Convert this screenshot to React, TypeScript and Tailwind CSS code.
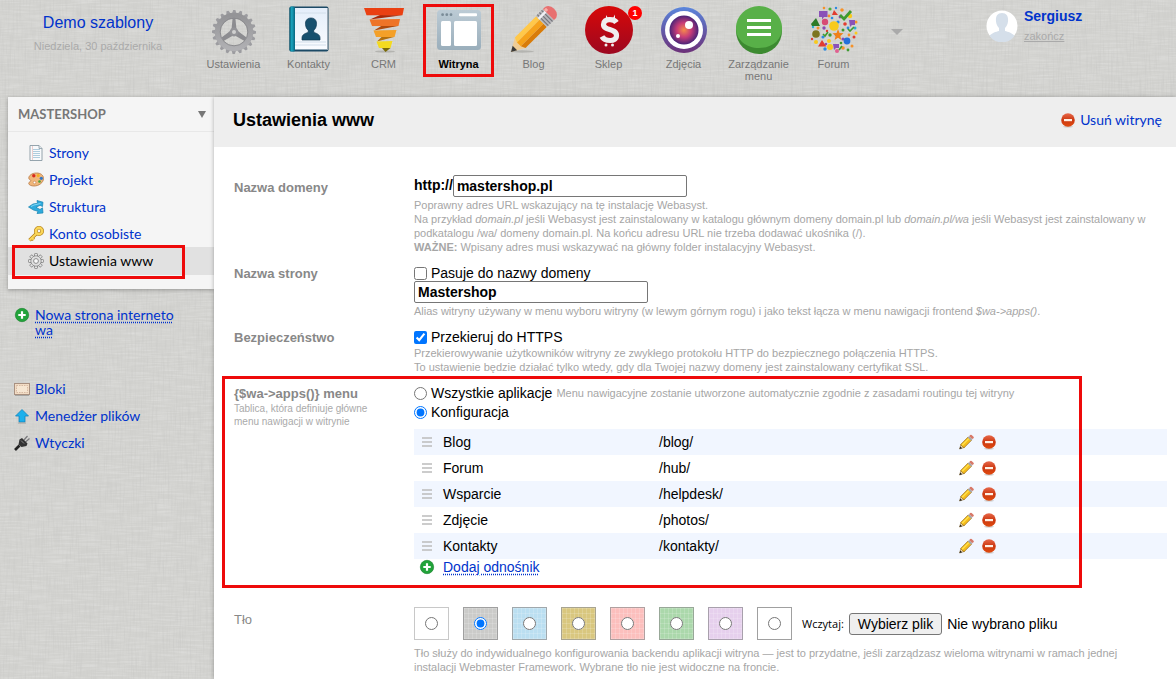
import { useRef, useState } from 'react'
import type { ReactNode } from 'react'

const apps = [
  { id: 'settings', label: 'Ustawienia', icon: GearAppIcon },
  { id: 'contacts', label: 'Kontakty', icon: ContactsAppIcon },
  { id: 'crm', label: 'CRM', icon: CrmAppIcon },
  { id: 'site', label: 'Witryna', icon: SiteAppIcon },
  { id: 'blog', label: 'Blog', icon: BlogAppIcon },
  { id: 'shop', label: 'Sklep', icon: ShopAppIcon, badge: 1 },
  { id: 'photos', label: 'Zdjęcia', icon: PhotosAppIcon },
  { id: 'menu', label: 'Zarządzanie menu', icon: MenuAppIcon },
  { id: 'hub', label: 'Forum', icon: ForumAppIcon }
]

const siteLinks = [
  { label: 'Strony', icon: PagesIcon },
  { label: 'Projekt', icon: PaletteIcon },
  { label: 'Struktura', icon: StructureIcon },
  { label: 'Konto osobiste', icon: KeyIcon }
]

const toolLinks = [
  { label: 'Bloki', icon: BlocksIcon },
  { label: 'Menedżer plików', icon: UploadIcon },
  { label: 'Wtyczki', icon: PlugIcon }
]

const menuRows = [
  { name: 'Blog', url: '/blog/' },
  { name: 'Forum', url: '/hub/' },
  { name: 'Wsparcie', url: '/helpdesk/' },
  { name: 'Zdjęcie', url: '/photos/' },
  { name: 'Kontakty', url: '/kontakty/' }
]

const backgrounds = [
  { id: 'none', className: 'bg-white border-[#c8c8c8]' },
  { id: 'linen', className: 'bg-[#cbcbc9] border-[#a0a0a0]' },
  { id: 'blue', className: 'bg-[#bbdff1] border-[#a0a8ac]' },
  { id: 'sand', className: 'bg-[#d9c77f] border-[#a8a490]' },
  { id: 'pink', className: 'bg-[#fcbfbd] border-[#b0a0a0]' },
  { id: 'green', className: 'bg-[#abd8ab] border-[#98a898]' },
  { id: 'violet', className: 'bg-[#e6d0ed] border-[#a8a0ac]' },
  { id: 'custom', className: 'bg-white border-[#a0a0a0]' }
]

const weave =
  'bg-[repeating-linear-gradient(90deg,rgba(255,255,255,0.16)_0_1px,transparent_1px_4px),repeating-linear-gradient(0deg,rgba(255,255,255,0.16)_0_1px,transparent_1px_5px)]'

const humanist = 'font-[Lato,sans-serif]'

/* ---------- app icons, 48px ---------- */

function GearAppIcon() {
  const teeth = Array.from({ length: 20 }, (_, i) => i * 18)
  return (
    <svg viewBox="0 0 48 48" className="size-12">
      <defs>
        <linearGradient id="gearFill" x1="0" y1="0" x2="0" y2="1">
          <stop offset="0" stopColor="#949497" />
          <stop offset="1" stopColor="#b0b0b3" />
        </linearGradient>
      </defs>
      {teeth.map((a) => (
        <path key={a} d="M21.8 8 L23.2 4 H25.4 L26.6 8 Z" fill="#9c9ca0" transform={`rotate(${a} 24 26)`} />
      ))}
      <circle cx="24" cy="26" r="16.4" fill="none" stroke="url(#gearFill)" strokeWidth="5.6" />
      <circle cx="24" cy="26" r="13.8" fill="none" stroke="#808084" strokeWidth="0.8" />
      <path d="M22.600 12 H25.400 L26.500 24 L36.500 31.500 L34.500 35 L24 29 L13.500 35 L11.500 31.500 L21.500 24z" fill="#8c8c90" />
      <circle cx="24" cy="26" r="4.4" fill="#949498" />
      <circle cx="24" cy="26" r="2" fill="#d0d0d0" />
    </svg>
  )
}

function ContactsAppIcon() {
  return (
    <svg viewBox="0 0 48 48" className="size-12">
      <defs>
        <linearGradient id="spine" x1="0" y1="0" x2="1" y2="0">
          <stop offset="0" stopColor="#04586f" />
          <stop offset="0.4" stopColor="#1ba6c0" />
          <stop offset="1" stopColor="#08657f" />
        </linearGradient>
        <linearGradient id="cover" x1="0" y1="0" x2="0" y2="1">
          <stop offset="0" stopColor="#e4eefa" />
          <stop offset="1" stopColor="#fafcff" />
        </linearGradient>
      </defs>
      <rect x="4.5" y="0.5" width="39" height="45" rx="2" fill="#1c4a66" />
      <rect x="9" y="2" width="33" height="41.5" fill="url(#cover)" />
      <path d="M10 7H41 M10 36H41 M10 39H41" stroke="#d2deea" />
      <rect x="4.5" y="0.5" width="5.5" height="45" rx="1.5" fill="url(#spine)" />
      <path d="M42.5 2V44" stroke="#9aa8b4" />
      <path d="M26 12c-4.200 0-5.800 3-5.500 6.500.2 2.700 1.300 4.500 2.700 5.700v2.200c-2.800.9-6.200 2-6.200 5.600V34h18v-2c0-3.600-3.400-4.700-6.200-5.600v-2.200c1.400-1.200 2.500-3 2.700-5.700.3-3.500-1.300-6.500-5.500-6.500z" fill="#17506e" stroke="#0f3a54" strokeWidth="0.7" />
    </svg>
  )
}

function CrmAppIcon() {
  return (
    <svg viewBox="0 0 48 48" className="size-12">
      <ellipse cx="25" cy="45.500" rx="10" ry="1" fill="#b4b4b0" />
      <path d="M42.500 9.200 L10 13.500 L20 9z" fill="#a82808" />
      <path d="M38 20 L14 24.500 L22 19.500z" fill="#b04a0c" />
      <path d="M34 31 L17 35.500 L22 30.500z" fill="#b4700c" />
      <path d="M22 42 H30.500 L25.500 46z" fill="#7a6a08" />
      <path d="M4 2 H44 L42.500 9.200 H6.500z" fill="#ea4012" />
      <path d="M9.500 13.500 L40 13 L38.500 20 L12 20z" fill="#ee7428" />
      <path d="M13.500 24.500 L36.500 24 L34.500 31 L16 31z" fill="#f4a028" />
      <path d="M16.500 35.500 L32.500 35 L30.500 42 L19 42z" fill="#f4da20" />
    </svg>
  )
}

function SiteAppIcon() {
  return (
    <svg viewBox="0 0 48 48" className="size-12">
      <defs>
        <linearGradient id="siteFrame" x1="0" y1="0" x2="0" y2="1">
          <stop offset="0" stopColor="#bccbd5" />
          <stop offset="1" stopColor="#9aaebb" />
        </linearGradient>
      </defs>
      <rect x="2" y="4" width="44" height="40" rx="3.500" fill="url(#siteFrame)" />
      <circle cx="7.600" cy="8.700" r="1.400" fill="#7a8c98" />
      <circle cx="11.800" cy="8.700" r="1.400" fill="#7a8c98" />
      <circle cx="16" cy="8.700" r="1.400" fill="#7a8c98" />
      <rect x="24" y="7.200" width="18" height="3" rx="1" fill="#fff" />
      <rect x="6" y="15" width="10" height="25" rx="1.500" fill="#fff" />
      <rect x="19" y="15" width="23" height="25" rx="1.500" fill="#fff" />
    </svg>
  )
}

function BlogAppIcon() {
  return (
    <svg viewBox="0 0 48 48" className="size-12">
      <ellipse cx="12" cy="45.500" rx="12" ry="1.200" fill="#b4b4b0" />
      <g transform="translate(1 46) rotate(-45)">
        <path d="M0 0 L13 -7.500 V7.500z" fill="#f0cd96" />
        <path d="M0 0 L5.500 -3.200 V3.200z" fill="#3a3a3a" />
        <path d="M13 -7.500 H43 V-2.500 H11 z" fill="#ffc84a" />
        <path d="M11 -2.500 H43 V3 H11z" fill="#f6a21a" />
        <path d="M11 3 H43 V7.500 H13z" fill="#d97c08" />
        <rect x="43" y="-7.800" width="10" height="15.600" fill="#b8b8bc" />
        <path d="M45 -7.800V7.800 M48 -7.800V7.800 M51 -7.800V7.800" stroke="#77777c" strokeWidth="1.200" />
        <path d="M43 -4 H53" stroke="#f0f0f4" strokeWidth="2.500" />
        <path d="M53 -7.800 H56 Q61 -6 61 0 Q61 6 56 7.800 H53z" fill="#e87070" />
        <path d="M53 -5 H56" stroke="#f8b0a8" strokeWidth="3" />
      </g>
    </svg>
  )
}

function ShopAppIcon() {
  return (
    <svg viewBox="0 0 48 48" className="size-12">
      <defs>
        <linearGradient id="shopFill" x1="0" y1="0" x2="0" y2="1">
          <stop offset="0" stopColor="#d80808" />
          <stop offset="1" stopColor="#9c0820" />
        </linearGradient>
      </defs>
      <circle cx="24" cy="24" r="24" fill="url(#shopFill)" />
      <path d="M31.500 16.500 C29 12.500 18.500 12 18.500 18.500 C18.500 25 31.500 22 31.500 29.500 C31.500 36.500 19.500 35.500 17 30.500" fill="none" stroke="#f0eeee" strokeWidth="5.200" />
      <path d="M21 9 L23 12 H28 L30 8.500 L30 15 H21z" fill="#f0eeee" />
      <circle cx="21" cy="39" r="1.500" fill="#f0eeee" />
      <circle cx="27.500" cy="39" r="1.500" fill="#f0eeee" />
    </svg>
  )
}

function PhotosAppIcon() {
  return (
    <svg viewBox="0 0 48 48" className="size-12">
      <defs>
        <linearGradient id="lensRing" x1="0" y1="0" x2="0" y2="1">
          <stop offset="0" stopColor="#5a86dc" />
          <stop offset="1" stopColor="#6c3078" />
        </linearGradient>
        <radialGradient id="lensCore">
          <stop offset="0" stopColor="#f58a4a" />
          <stop offset="0.5" stopColor="#c83c78" />
          <stop offset="1" stopColor="#4a2478" />
        </radialGradient>
      </defs>
      <circle cx="24" cy="24" r="23" fill="url(#lensRing)" />
      <circle cx="24" cy="24" r="19" fill="#fff" />
      <circle cx="24" cy="24" r="14.500" fill="url(#lensCore)" />
      <circle cx="29" cy="19" r="4" fill="#fff" />
      <circle cx="18" cy="30" r="2" fill="#fff" />
    </svg>
  )
}

function MenuAppIcon() {
  return (
    <svg viewBox="0 0 48 48" className="size-12">
      <circle cx="24" cy="25" r="23" fill="#3c8a30" />
      <path d="M1 22 A23 22 0 0 1 47 22 C47 34 37 42 24 42 C11 42 1 34 1 22z" fill="#58b048" />
      <path d="M12 14.500H36 M12 21.500H36 M12 28.500H36" stroke="#fff" strokeWidth="3" />
    </svg>
  )
}

const forumDots: [number, number, number, string][] = [
  [20, 3, 1.6, '#4aae3c'], [32, 4, 1.8, '#f5922a'], [40, 10, 2.2, '#f8ca1c'], [26, 2, 1.2, '#2c8ae0'],
  [15, 16, 3.2, '#d84a74'], [28, 16, 1.6, '#2c8ae0'], [35, 18, 1.8, '#e23c30'], [46, 16, 1.5, '#f5922a'],
  [24, 20, 4.8, '#f8ca1c'], [14, 22, 1.7, '#8a48b4'], [33, 24, 1.5, '#3f9a30'], [45, 22, 1.5, '#2cb0d0'],
  [6, 28, 3.8, '#7c7420'], [13, 31, 1.6, '#2c8ae0'], [20, 29, 1.7, '#3f9a30'], [19, 35, 2, '#f8ca1c'],
  [33, 33, 1.6, '#8a48b4'], [37, 35, 3.4, '#2470dc'], [44, 31, 1.5, '#e23c30'], [46, 27, 1.5, '#f8ca1c'],
  [6, 36, 2, '#f8ca1c'], [15, 43, 1.7, '#2c8ae0'], [20, 41, 3, '#f8ca1c'], [27, 45, 2, '#e06090'],
  [33, 42, 1.8, '#f5922a'], [42, 40, 1.5, '#f5922a'], [38, 44, 1.4, '#3f9a30'], [3, 21, 1.2, '#2cb0d0'],
  [22, 12, 1.3, '#2c8ae0'], [14, 2, 1.3, '#f5922a'], [30, 11, 1.4, '#8a48b4'], [2, 33, 1.2, '#e23c30'],
  [26, 29, 1.2, '#2c8ae0'], [31, 37, 1.3, '#3f9a30'], [39, 29, 1.4, '#f5922a'], [17, 25, 1.2, '#e23c30'],
  [19, 10, 1.4, '#f5922a'], [38, 22, 1.4, '#2c8ae0'], [8, 22, 1.5, '#f5922a'], [16, 38, 1.2, '#8a48b4']
]

function ForumAppIcon() {
  return (
    <svg viewBox="0 0 48 48" className="size-12">
      {forumDots.map(([x, y, r, fill]) => (
        <circle key={`${x}-${y}`} cx={x} cy={y} r={r} fill={fill} />
      ))}
      <path d="M9 5h8.500v6H14l-2 2.500V11H9z" fill="#8a52b8" />
      <path d="M24 4l4 5h-6z" fill="#e23c30" />
      <path d="M30 9l4 4 7-8" fill="none" stroke="#3f9a30" strokeWidth="2.800" />
      <path d="M1 18l5-6 3 6 1 2H2z" fill="#2c7a28" />
      <path d="M39 14h6v5h-3l-2 2z" fill="#8a52b8" />
      <path d="M28 23l1.500 4 4 .3-3.200 2.600 1 4-3.300-2.200-3.400 2.200 1-4-3-2.600 4-.3z" fill="#f08018" />
      <path d="M12 34l4.500 6.500H8z" fill="#e23c30" />
      <path d="M23 38h6v4h-3l-2 2z" fill="#8a52b8" />
      <path d="M38 23l2 2 4-4 M13 28l2 2 3-4 M29 44l3-4" fill="none" stroke="#3f9a30" strokeWidth="1.600" />
    </svg>
  )
}

/* ---------- 16px icons ---------- */

function PagesIcon() {
  return (
    <svg viewBox="0 0 16 16" className="size-4 shrink-0">
      <path d="M2 .5H11L14 3.500V15.500H2z" fill="#f8fafc" stroke="#8a9aa4" strokeWidth="0.900" />
      <path d="M11 .5V3.500H14" fill="#dfe6ea" stroke="#8a9aa4" strokeWidth="0.800" />
      <path d="M5 4.500H12 M5 6.500H12 M5 8.500H12 M5 10.500H12 M5 12.500H12" stroke="#9cc0d4" strokeWidth="0.800" />
      <path d="M4.500 1V15" stroke="#e4b0ac" strokeWidth="0.600" />
    </svg>
  )
}

function PaletteIcon() {
  return (
    <svg viewBox="0 0 16 16" className="size-4 shrink-0">
      <path d="M8.500 1C3.500 1 .5 4 .8 6.300c.2 1.600 2 1.200 2 2.400C2.800 9.900.7 9.800.7 11.300.7 13 3.300 14 6 14c5 0 9.500-3.500 9.500-7.500C15.500 3 12.500 1 8.500 1z" fill="#f0b67a" stroke="#b87844" strokeWidth="0.800" />
      <circle cx="5.800" cy="3.800" r="1.700" fill="#d8281c" />
      <circle cx="10.200" cy="3.400" r="1.500" fill="#f4b01c" />
      <circle cx="13.300" cy="6.300" r="1.600" fill="#3278c8" />
      <circle cx="11.500" cy="9.500" r="1.300" fill="#48a038" />
      <circle cx="6.500" cy="10.500" r="1.300" fill="#fff" stroke="#b4703a" strokeWidth="0.500" />
    </svg>
  )
}

function StructureIcon() {
  return (
    <svg viewBox="0 0 16 16" className="size-4 shrink-0">
      <path d="M.5 8 L5 5 L9.500 4.300 L9 1.500 L15 3.200 L14.500 7.500 L12 6.300 L8 8.300 L12 10.500 L14.500 8.800 L15 14 L9 14.500 L10 12.300 L5.500 11z" fill="#2eaadc" stroke="#1682b0" strokeWidth="0.700" />
      <path d="M3 7.500 L6 6 L12.500 4.500" fill="none" stroke="#8cdcf8" strokeWidth="0.900" />
    </svg>
  )
}

function KeyIcon() {
  return (
    <svg viewBox="0 0 16 16" className="size-4 shrink-0">
      <path d="M8.500 7.500 L1.500 14.300 M4 12 L5.800 13.800" stroke="#b07c14" strokeWidth="3.400" />
      <circle cx="11" cy="5" r="3.200" fill="none" stroke="#b07c14" strokeWidth="3.600" />
      <path d="M8.500 7.500 L1.500 14.300 M4 12 L5.800 13.800" stroke="#fad658" strokeWidth="2" />
      <circle cx="11" cy="5" r="3.200" fill="none" stroke="#fad658" strokeWidth="2.400" />
    </svg>
  )
}

function SmallGearIcon() {
  const teeth = Array.from({ length: 8 }, (_, i) => i * 45)
  return (
    <svg viewBox="0 0 16 16" className="size-4 shrink-0">
      {teeth.map((a) => (
        <rect key={a} x="6.500" y="0.500" width="3" height="3.500" rx="0.800" fill="#e4e4e4" stroke="#7a7a7a" strokeWidth="0.800" transform={`rotate(${a} 8 8)`} />
      ))}
      <circle cx="8" cy="8" r="5.200" fill="#e0e0e0" stroke="#7a7a7a" strokeWidth="0.700" />
      <circle cx="8" cy="8" r="2.400" fill="#fafafa" stroke="#808080" strokeWidth="0.900" />
    </svg>
  )
}

function AddIcon() {
  return (
    <svg viewBox="0 0 16 16" className="size-4 shrink-0">
      <circle cx="8" cy="8" r="6.700" fill="#22a33a" stroke="#15802a" strokeWidth="0.600" />
      <path d="M8 4.300V11.700 M4.300 8H11.700" stroke="#fff" strokeWidth="2.200" />
    </svg>
  )
}

function DeleteIcon() {
  return (
    <svg viewBox="0 0 16 16" className="size-4 shrink-0">
      <defs>
        <linearGradient id="stop" x1="0" y1="0" x2="0" y2="1">
          <stop offset="0" stopColor="#e8694c" />
          <stop offset="0.500" stopColor="#cc3810" />
          <stop offset="1" stopColor="#e04c10" />
        </linearGradient>
      </defs>
      <ellipse cx="8" cy="14.700" rx="5" ry="0.800" fill="#c8c8c8" />
      <circle cx="8" cy="8" r="6.800" fill="url(#stop)" />
      <rect x="4" y="7" width="8" height="2.200" fill="#fff0e4" />
    </svg>
  )
}

function EditIcon() {
  return (
    <svg viewBox="0 0 16 16" className="size-4 shrink-0">
      <g transform="translate(1.500 15) rotate(-45)">
        <path d="M0 0 L4.500 -2.300 V2.300z" fill="#f4dcae" stroke="#7a5a20" strokeWidth="0.500" />
        <path d="M0 0 L2.400 -1.300 V1.300z" fill="#222" />
        <rect x="4" y="-2.300" width="10.500" height="4.600" fill="#f6bc1c" stroke="#94660c" strokeWidth="0.700" />
        <path d="M4.500 -0.800H14" stroke="#ffe24c" strokeWidth="1.400" />
        <rect x="14" y="-2.300" width="2" height="4.600" fill="#a8a8a8" />
        <rect x="16" y="-2.300" width="2.500" height="4.600" rx="1" fill="#d87868" />
      </g>
    </svg>
  )
}

function BlocksIcon() {
  return (
    <svg viewBox="0 0 16 16" className="size-4 shrink-0">
      <rect x="0.500" y="2.500" width="15" height="11" fill="#f2dcc4" stroke="#a89080" />
      <rect x="2.500" y="4.500" width="11" height="7" fill="#f6e6d2" stroke="#c8a890" strokeDasharray="1.500 1" strokeWidth="0.700" />
      <path d="M1 14.500H15" stroke="#9a9a98" strokeWidth="0.800" />
    </svg>
  )
}

function UploadIcon() {
  return (
    <svg viewBox="0 0 16 16" className="size-4 shrink-0">
      <path d="M8 1.500 L14.500 8 H11 V14 H5 V8 H1.500z" fill="#1cb0ec" stroke="#1284bc" strokeWidth="0.800" />
      <path d="M4 15H12" stroke="#a0a09c" />
    </svg>
  )
}

function PlugIcon() {
  return (
    <svg viewBox="0 0 16 16" className="size-4 shrink-0">
      <path d="M10 5 L13.500 1 M11.500 7 L15.500 3.500" stroke="#77777a" strokeWidth="1.200" />
      <path d="M8 3 L13.500 8.500 L12.500 11 L7.500 12 L4.500 9.500 L5.500 4.500z" fill="#333" />
      <path d="M5.500 10.500 L1 15" stroke="#222" strokeWidth="2.600" />
      <path d="M7 5.500 L10 8.500" stroke="#888" />
    </svg>
  )
}

function SortIcon() {
  return (
    <svg viewBox="0 0 10 10" className="size-2.5">
      <path d="M0 1H10 M0 5H10 M0 9H10" stroke="#bcbcbc" strokeWidth="1.600" />
    </svg>
  )
}

/* ---------- layout pieces ---------- */

// Fine woven texture behind the whole page
function Linen() {
  return (
    <svg className="absolute inset-0 size-full opacity-40" aria-hidden="true">
      <filter id="weft" x="0" y="0" width="100%" height="100%">
        <feTurbulence type="fractalNoise" baseFrequency="0.04 0.6" numOctaves="2" seed="4" />
        <feColorMatrix values="0 0 0 0 1  0 0 0 0 1  0 0 0 0 1  1.100 0 0 0 -0.430" />
      </filter>
      <filter id="warp" x="0" y="0" width="100%" height="100%">
        <feTurbulence type="fractalNoise" baseFrequency="0.6 0.04" numOctaves="2" seed="9" />
        <feColorMatrix values="0 0 0 0 0.450  0 0 0 0 0.450  0 0 0 0 0.440  1 0 0 0 -0.440" />
      </filter>
      <rect width="100%" height="100%" filter="url(#weft)" />
      <rect width="100%" height="100%" filter="url(#warp)" />
    </svg>
  )
}

function Frame({ className }: { className: string }) {
  return <div className={`pointer-events-none absolute border-[3px] border-[#ee0a0a] ${className}`} />
}

function Field({ label, note, className = '', children }: { label: ReactNode; note?: ReactNode; className?: string; children: ReactNode }) {
  return (
    <div className={`relative flex ${className}`}>
      <div className="w-[180px] shrink-0 pt-px text-[13px] leading-4 text-[#888]">
        {label}
        {note}
      </div>
      <div className="min-w-0 flex-1">{children}</div>
    </div>
  )
}

function Hint({ children }: { children: ReactNode }) {
  return <p className="pt-px text-[11px] leading-[14px] text-[#a6a6a6]">{children}</p>
}

function Header() {
  return (
    <header className="relative flex h-[97px]">
      <div className="w-[196px] shrink-0 pt-3 text-center">
        <a href="#" className="block text-base leading-[22px] text-[#03c]">Demo szablony</a>
        <div className="mt-1 text-[11px] leading-4 text-[#aaa]">Niedziela, 30 października</div>
      </div>
      <nav className="flex">
        {apps.map((app) => {
          const Icon = app.icon
          const active = app.id === 'site'
          return (
            <a
              key={app.id}
              href="#"
              className={`relative flex w-[75px] flex-col items-center pt-1.5 text-center text-[11px] leading-3 ${
                active ? 'font-bold text-black' : 'text-[#777]'
              }`}
            >
              <Icon />
              <span className="mt-1 px-1">{app.label}</span>
              {app.badge && (
                <span className="absolute top-1.5 right-1 flex size-3.5 items-center justify-center rounded-full bg-[#f00] text-[9px] font-bold text-white">
                  {app.badge}
                </span>
              )}
              {active && <Frame className="inset-x-0.5 top-1 h-[73px]" />}
            </a>
          )
        })}
      </nav>
      <button type="button" aria-label="Więcej" className="ml-5 h-16 w-3">
        <svg viewBox="0 0 12 6" className="h-1.5 w-3"><path d="M0 0H12L6 6z" fill="#aaa" /></svg>
      </button>
      <div className="ml-[83px] flex pt-2">
        <svg viewBox="0 0 32 32" className="mt-0.5 size-8">
          <circle cx="16" cy="16" r="15.500" fill="#fff" />
          <path d="M16 3c-5 0-6.500 4-6 8.500.3 3 1.500 5 3 6.500v3c-3 1-7 1.500-9.500 5A15.500 15.500 0 0 0 28.500 26c-2.500-3.500-6.500-4-9.500-5v-3c1.500-1.500 2.700-3.500 3-6.500.5-4.500-1-8.500-6-8.500z" fill="#d5dfea" />
        </svg>
        <div className="ml-1.5">
          <a href="#" className="block text-sm leading-4 font-bold text-[#03c]">Sergiusz</a>
          <a href="#" className="mt-1 block text-[11px] leading-4 text-[#aaa] underline">zakończ</a>
        </div>
      </div>
    </header>
  )
}

function Sidebar() {
  return (
    <aside className={`relative w-[214px] shrink-0 pl-2 text-sm text-[#03c] ${humanist}`}>
      <div className="h-48 bg-[#f5f5f5] shadow-[0_1px_4px_rgba(0,0,0,0.3)]">
        <button type="button" className="flex h-[35px] w-full items-center justify-between border-b border-[#e8e8e8] pr-2 pl-2.5 text-[13px] font-bold text-[#777]">
          MASTERSHOP
          <svg viewBox="0 0 8 7" className="h-[7px] w-2"><path d="M0 0H8L4 7z" fill="#777" /></svg>
        </button>
        <ul className="pt-[7px]">
          {siteLinks.map(({ label, icon: Icon }) => (
            <li key={label}>
              <a href="#" className="flex h-[27px] items-center gap-[5px] pl-5"><Icon />{label}</a>
            </li>
          ))}
          <li className="relative bg-[#e1e1e1] text-black">
            <a href="#" className="flex h-7 items-center gap-[5px] pl-5"><SmallGearIcon />Ustawienia www</a>
            <Frame className="-top-0.5 left-1 h-[34px] w-[173px]" />
          </li>
        </ul>
      </div>
      <a href="#" className="mt-[18px] flex items-start gap-[5px] pl-1.5 leading-[15px]">
        <AddIcon />
        <span className="w-[142px] break-all underline decoration-dotted underline-offset-2">Nowa strona interneto<wbr />wa</span>
      </a>
      <ul className="mt-[38px] pl-1.5">
        {toolLinks.map(({ label, icon: Icon }) => (
          <li key={label}>
            <a href="#" className="flex h-[27px] items-center gap-[5px]"><Icon />{label}</a>
          </li>
        ))}
      </ul>
    </aside>
  )
}

function MenuTable() {
  return (
    <table className="mt-[9px] w-full table-fixed border-collapse">
      <tbody>
        {menuRows.map((row) => (
          <tr key={row.url} className="h-[26px] odd:bg-[#f1f6ff]">
            <td className="w-[29px] pl-2"><SortIcon /></td>
            <td className="w-[216px]">{row.name}</td>
            <td className="w-[299px]">{row.url}</td>
            <td>
              <div className="flex gap-[7px]">
                <button type="button" aria-label={`Edytuj ${row.name}`}><EditIcon /></button>
                <button type="button" aria-label={`Usuń ${row.name}`}><DeleteIcon /></button>
              </div>
            </td>
          </tr>
        ))}
      </tbody>
    </table>
  )
}

function SettingsForm() {
  const [domain, setDomain] = useState('mastershop.pl')
  const [siteName, setSiteName] = useState('Mastershop')
  const [background, setBackground] = useState('linen')
  const fileInput = useRef<HTMLInputElement>(null)
  const textInput = 'h-[22px] w-[234px] rounded-[2px] border border-[#767676] bg-white px-[3px] text-sm font-bold text-black'

  return (
    <form className="pt-7 pr-[9px] pl-5 text-sm leading-4" onSubmit={(e) => e.preventDefault()}>
      <Field label={<label htmlFor="domain" className="block pt-1 font-bold">Nazwa domeny</label>}>
        <div className="flex">
          <span className="pt-0.5 font-bold">http://</span>
          <input id="domain" type="text" className={textInput} value={domain} onChange={(e) => setDomain(e.target.value)} />
        </div>
        <Hint>
          Poprawny adres URL wskazujący na tę instalację Webasyst.<br />
          Na przykład <i>domain.pl</i> jeśli Webasyst jest zainstalowany w katalogu głównym domeny domain.pl lub <i>domain.pl/wa</i> jeśli Webasyst jest zainstalowany w<br />
          podkatalogu /wa/ domeny domain.pl. Na końcu adresu URL nie trzeba dodawać ukośnika (/).<br />
          <b>WAŻNE:</b> Wpisany adres musi wskazywać na główny folder instalacyjny Webasyst.
        </Hint>
      </Field>

      <Field className="mt-[11px]" label={<label htmlFor="site-name" className="block font-bold">Nazwa strony</label>}>
        <label className="flex items-center gap-1">
          <input type="checkbox" className="size-[13px]" />
          Pasuje do nazwy domeny
        </label>
        <input id="site-name" type="text" className={`block ${textInput}`} value={siteName} onChange={(e) => setSiteName(e.target.value)} />
        <Hint>
          Alias witryny używany w menu wyboru witryny (w lewym górnym rogu) i jako tekst łącza w menu nawigacji frontend <i>$wa-&gt;apps()</i>.
        </Hint>
      </Field>

      <Field className="mt-[11px]" label={<span className="font-bold">Bezpieczeństwo</span>}>
        <label className="flex items-center gap-1">
          <input type="checkbox" defaultChecked className="size-[13px]" />
          Przekieruj do HTTPS
        </label>
        <Hint>
          Przekierowywanie użytkowników witryny ze zwykłego protokołu HTTP do bezpiecznego połączenia HTTPS.<br />
          To ustawienie będzie działać tylko wtedy, gdy dla Twojej nazwy domeny jest zainstalowany certyfikat SSL.
        </Hint>
      </Field>

      <Field
        className="mt-[11px]"
        label={<span className="font-bold">{'{$wa->apps()} menu'}</span>}
        note={<p className="w-[150px] text-[10px] leading-[13px] text-[#aaa]">Tablica, która definiuje główne menu nawigacji w witrynie</p>}
      >
        <div className="flex items-center gap-1">
          <label className="flex items-center gap-1">
            <input type="radio" name="apps-menu" className="size-[13px]" />
            Wszystkie aplikacje
          </label>
          <span className="text-[11px] text-[#a6a6a6]">Menu nawigacyjne zostanie utworzone automatycznie zgodnie z zasadami routingu tej witryny</span>
        </div>
        <label className="mt-[3px] flex items-center gap-1">
          <input type="radio" name="apps-menu" defaultChecked className="size-[13px]" />
          Konfiguracja
        </label>
        <MenuTable />
        <a href="#" className="flex items-center gap-2 pl-[5px] text-[#03c]">
          <AddIcon />
          <span className="underline decoration-dotted underline-offset-2">Dodaj odnośnik</span>
        </a>
        <Frame className="-top-[9px] -bottom-[13px] -left-3 right-[85px]" />
      </Field>

      <Field className="mt-8" label={<span className="block pt-1">Tło</span>}>
        <div className="flex items-center gap-3.5">
          {backgrounds.map((bg) => (
            <label key={bg.id} className={`flex h-[33px] w-[35px] items-center justify-center border ${bg.className} ${bg.id === 'none' || bg.id === 'custom' ? '' : weave}`}>
              <input
                type="radio"
                name="background"
                aria-label={bg.id}
                className="size-[13px]"
                checked={background === bg.id}
                onChange={() => setBackground(bg.id)}
              />
            </label>
          ))}
          <div className="-ml-1 flex items-center gap-[5px] whitespace-nowrap">
            <label htmlFor="bg-file" className="text-[11px] font-['Open_Sans',sans-serif]">Wczytaj:</label>
            <input ref={fileInput} id="bg-file" type="file" className="hidden" />
            <button type="button" className="h-[22px] rounded-[3px] border border-[#767676] bg-[#efefef] px-2" onClick={() => fileInput.current?.click()}>
              Wybierz plik
            </button>
            <span>Nie wybrano pliku</span>
          </div>
        </div>
        <div className="mt-[5px] max-w-[730px]">
          <Hint>
            Tło służy do indywidualnego konfigurowania backendu aplikacji witryna — jest to przydatne, jeśli zarządzasz wieloma witrynami w ramach jednej instalacji Webmaster Framework. Wybrane tło nie jest widoczne na froncie.
          </Hint>
        </div>
      </Field>
    </form>
  )
}

export default function App() {
  return (
    <div className="relative flex min-h-screen flex-col bg-[#d2d2cf] font-['Liberation_Sans',Arial,sans-serif] text-black">
      <Linen />
      <Header />
      <div className="flex flex-1">
        <Sidebar />
        <main className="relative min-w-0 flex-1 bg-white shadow-[0_0_4px_rgba(0,0,0,0.3)]">
          <div className="flex h-[50px] items-center justify-between bg-[#eee] pr-3.5 pb-1 pl-[19px]">
            <h1 className="text-lg font-bold">Ustawienia www</h1>
            <a href="#" className={`flex items-center gap-1 text-sm text-[#03c] ${humanist}`}>
              <DeleteIcon />
              Usuń witrynę
            </a>
          </div>
          <SettingsForm />
        </main>
      </div>
    </div>
  )
}
